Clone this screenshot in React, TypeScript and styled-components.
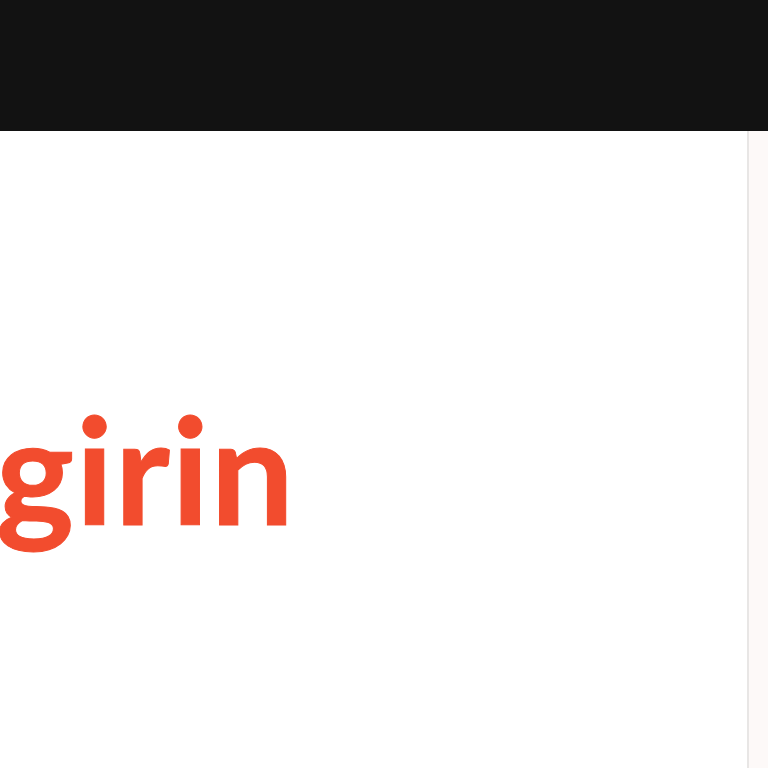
import React from "react";
import styled, { createGlobalStyle } from "styled-components";

const Global = createGlobalStyle`
  html, body { margin: 0; padding: 0; background: #fff; }
  #root { min-height: 100vh; display: flex; flex-direction: column; }
`;

const Page = styled.div`
  flex: 1;
  display: flex;
  flex-direction: column;
  min-height: 100vh;
  overflow: hidden;
`;

const TopBar = styled.header`
  height: 131px;
  flex: none;
  background: #121212;
`;

const Body = styled.div`
  flex: 1;
  display: flex;
`;

const Main = styled.main`
  width: 747px;
  flex: none;
  background: #ffffff;
  overflow: hidden;
  padding-top: 263px;
`;

const Aside = styled.aside`
  flex: 1;
  background: #fdf9f8;
  border-left: 2px solid #e8e6e5;
`;

const Headline = styled.h1`
  margin: 0 0 0 -4px;
  font-family: Lato, "Open Sans", sans-serif;
  font-weight: 700;
  font-size: 148px;
  line-height: 1;
  letter-spacing: 1.5px;
  color: #f24c2e;
  white-space: nowrap;
  -webkit-text-stroke: 1px #f24c2e;
`;

export default function App() {
  return (
    <>
      <Global />
      <Page>
        <TopBar />
        <Body>
          <Main>
            <Headline>girin</Headline>
          </Main>
          <Aside />
        </Body>
      </Page>
    </>
  );
}
